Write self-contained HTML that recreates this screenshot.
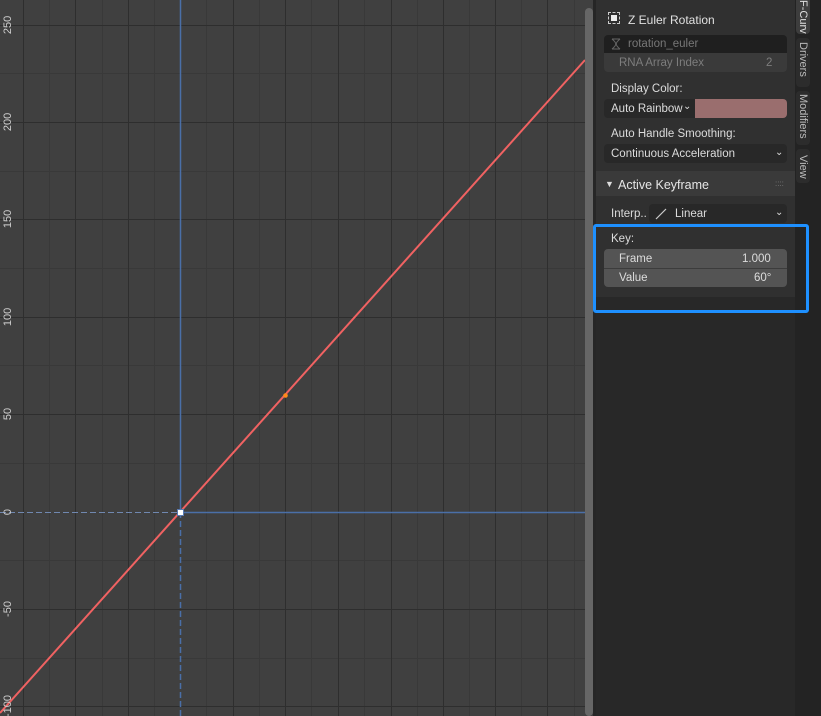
<!DOCTYPE html>
<html><head><style>
body{margin:0;width:821px;height:716px;overflow:hidden;background:#404040;font-family:"Liberation Sans",sans-serif;position:relative}
.a{position:absolute}
.t{position:absolute;font-size:11.5px;color:#dcdcdc;white-space:nowrap}
.tab{position:absolute;left:796px;width:14px;overflow:hidden;border-radius:0 0 4px 4px}
.tab span{position:absolute;left:13px;top:0;transform-origin:0 0;transform:rotate(90deg);font-size:11px;color:#bbb;white-space:nowrap}
</style></head><body>
<svg class="a" style="left:0;top:0" width="596" height="716">
<rect width="596" height="716" fill="#404040"/>
<g stroke="#393939" stroke-width="1">
<line x1="49.5" y1="0" x2="49.5" y2="716"/><line x1="102.5" y1="0" x2="102.5" y2="716"/><line x1="154.5" y1="0" x2="154.5" y2="716"/><line x1="206.5" y1="0" x2="206.5" y2="716"/><line x1="259.5" y1="0" x2="259.5" y2="716"/><line x1="311.5" y1="0" x2="311.5" y2="716"/><line x1="364.5" y1="0" x2="364.5" y2="716"/><line x1="417.5" y1="0" x2="417.5" y2="716"/><line x1="469.5" y1="0" x2="469.5" y2="716"/><line x1="521.5" y1="0" x2="521.5" y2="716"/><line x1="574.5" y1="0" x2="574.5" y2="716"/>
<line x1="0" y1="73.5" x2="585" y2="73.5"/><line x1="0" y1="171.5" x2="585" y2="171.5"/><line x1="0" y1="268.5" x2="585" y2="268.5"/><line x1="0" y1="365.5" x2="585" y2="365.5"/><line x1="0" y1="463.5" x2="585" y2="463.5"/><line x1="0" y1="560.5" x2="585" y2="560.5"/><line x1="0" y1="658.5" x2="585" y2="658.5"/>
</g>
<g stroke="#2e2e2e" stroke-width="1">
<line x1="23.5" y1="0" x2="23.5" y2="716"/><line x1="75.5" y1="0" x2="75.5" y2="716"/><line x1="128.5" y1="0" x2="128.5" y2="716"/><line x1="233.5" y1="0" x2="233.5" y2="716"/><line x1="285.5" y1="0" x2="285.5" y2="716"/><line x1="338.5" y1="0" x2="338.5" y2="716"/><line x1="391.5" y1="0" x2="391.5" y2="716"/><line x1="443.5" y1="0" x2="443.5" y2="716"/><line x1="495.5" y1="0" x2="495.5" y2="716"/><line x1="547.5" y1="0" x2="547.5" y2="716"/>
<line x1="0" y1="25.5" x2="585" y2="25.5"/><line x1="0" y1="122.5" x2="585" y2="122.5"/><line x1="0" y1="219.5" x2="585" y2="219.5"/><line x1="0" y1="317.5" x2="585" y2="317.5"/><line x1="0" y1="414.5" x2="585" y2="414.5"/><line x1="0" y1="609.5" x2="585" y2="609.5"/><line x1="0" y1="706.5" x2="585" y2="706.5"/>
</g>
<line x1="180.5" y1="0" x2="180.5" y2="512" stroke="#4a6fa8" stroke-width="1.5"/>
<line x1="180.5" y1="512" x2="180.5" y2="716" stroke="#4a6fa8" stroke-width="1.5" stroke-dasharray="6,3"/>
<line x1="180" y1="512.5" x2="596" y2="512.5" stroke="#4a6fa8" stroke-width="1.5"/>
<line x1="0" y1="512.5" x2="180" y2="512.5" stroke="#7088b0" stroke-width="1" stroke-dasharray="6,3"/>
<line x1="0" y1="713" x2="585" y2="60" stroke="#f06262" stroke-width="2"/>
<circle cx="285.5" cy="395.5" r="2.3" fill="#ff8a1a"/>
<rect x="177.5" y="509.5" width="6" height="6" fill="#ffffff" stroke="#5a7ab0" stroke-width="1"/>
<g fill="#cfcfcf" font-size="11" font-family="Liberation Sans">
<text transform="translate(11,25) rotate(-90)" text-anchor="middle">250</text>
<text transform="translate(11,122) rotate(-90)" text-anchor="middle">200</text>
<text transform="translate(11,219) rotate(-90)" text-anchor="middle">150</text>
<text transform="translate(11,317) rotate(-90)" text-anchor="middle">100</text>
<text transform="translate(11,414) rotate(-90)" text-anchor="middle">50</text>
<text transform="translate(11,512) rotate(-90)" text-anchor="middle">0</text>
<text transform="translate(11,609) rotate(-90)" text-anchor="middle">-50</text>
<text transform="translate(11,706) rotate(-90)" text-anchor="middle">-100</text>
</g>
<rect x="585" y="8" width="8" height="708" rx="4" fill="#666"/>
</svg>
<div class="a" style="left:593px;top:0;width:3px;height:716px;background:#262626"></div>
<div class="a" style="left:596px;top:0;width:200px;height:716px;background:#282828"></div>
<div class="a" style="left:596px;top:0;width:199px;height:297px;background:#303030"></div>
<div class="a" style="left:795px;top:0;width:26px;height:716px;background:#232323"></div>
<div class="tab" style="top:0;height:34px;background:#3d3d3d"><span style="color:#e0e0e0">F-Curve</span></div>
<div class="tab" style="top:38px;height:49px;background:#2c2c2c;border-radius:4px"><span style="top:4px">Drivers</span></div>
<div class="tab" style="top:91px;height:54px;background:#2c2c2c;border-radius:4px"><span style="top:3px">Modifiers</span></div>
<div class="tab" style="top:149px;height:34px;background:#2c2c2c;border-radius:4px"><span style="top:6px">View</span></div>
<div class="a" style="left:608px;top:12px;width:12px;height:12px;border:1px dashed #ccc;box-sizing:border-box"></div>
<div class="a" style="left:611px;top:15px;width:6px;height:6px;background:#eee"></div>
<div class="t" style="left:628px;top:13px;font-size:12px;color:#e0e0e0">Z Euler Rotation</div>
<div class="a" style="left:604px;top:35px;width:183px;height:37px;border-radius:4px;background:#3a3a3a;overflow:hidden">
<div class="a" style="left:0;top:0;width:183px;height:18px;background:#1f1f1f"></div></div>
<svg class="a" style="left:609px;top:37px" width="14" height="14"><path d="M3 2 C8 6 8 8 3 12 M11 2 C6 6 6 8 11 12 M3 2 H11 M3 12 H11" stroke="#666" fill="none" stroke-width="1"/></svg>
<div class="t" style="left:628px;top:38px;color:#777">rotation_euler</div>
<div class="t" style="left:619px;top:57px;color:#7d7d7d">RNA Array Index</div>
<div class="t" style="left:766px;top:57px;color:#7d7d7d">2</div>
<div class="t" style="left:611px;top:83px">Display Color:</div>
<div class="a" style="left:604px;top:99px;width:91px;height:19px;background:#282828;border-radius:4px 0 0 4px"></div>
<div class="t" style="left:611px;top:103px">Auto Rainbow</div>
<div class="t" style="left:683px;top:101px;font-size:10px">⌄</div>
<div class="a" style="left:695px;top:99px;width:92px;height:19px;background:#9a6e6e;border-radius:0 4px 4px 0"></div>
<div class="t" style="left:611px;top:128px">Auto Handle Smoothing:</div>
<div class="a" style="left:604px;top:144px;width:183px;height:19px;background:#282828;border-radius:4px"></div>
<div class="t" style="left:611px;top:148px">Continuous Acceleration</div>
<div class="t" style="left:775px;top:147px;font-size:10px">⌄</div>
<div class="a" style="left:596px;top:171px;width:199px;height:25px;background:#3a3a3a"></div>
<div class="t" style="left:605px;top:179px;font-size:9px">▼</div>
<div class="t" style="left:618px;top:178px;font-size:12.5px;color:#e6e6e6">Active Keyframe</div>
<div class="t" style="left:775px;top:179px;font-size:8px;color:#777">::::</div>
<div class="t" style="left:611px;top:208px">Interp..</div>
<div class="a" style="left:649px;top:204px;width:138px;height:19px;background:#282828;border-radius:4px"></div>
<svg class="a" style="left:654px;top:207px" width="14" height="14"><line x1="2" y1="12" x2="12" y2="2" stroke="#ccc" stroke-width="1.2"/></svg>
<div class="t" style="left:675px;top:208px">Linear</div>
<div class="t" style="left:775px;top:207px;font-size:10px">⌄</div>
<div class="t" style="left:611px;top:233px">Key:</div>
<div class="a" style="left:604px;top:249px;width:183px;height:38px;background:#545454;border-radius:4px"></div>
<div class="a" style="left:604px;top:268px;width:183px;height:1px;background:#3c3c3c"></div>
<div class="t" style="left:619px;top:253px">Frame</div>
<div class="t" style="left:742px;top:253px">1.000</div>
<div class="t" style="left:619px;top:272px">Value</div>
<div class="t" style="left:754px;top:272px">60°</div>
<div class="a" style="left:593px;top:224px;width:216px;height:89px;border:3px solid #1e90ff;border-radius:3px;box-sizing:border-box"></div>
</body></html>
